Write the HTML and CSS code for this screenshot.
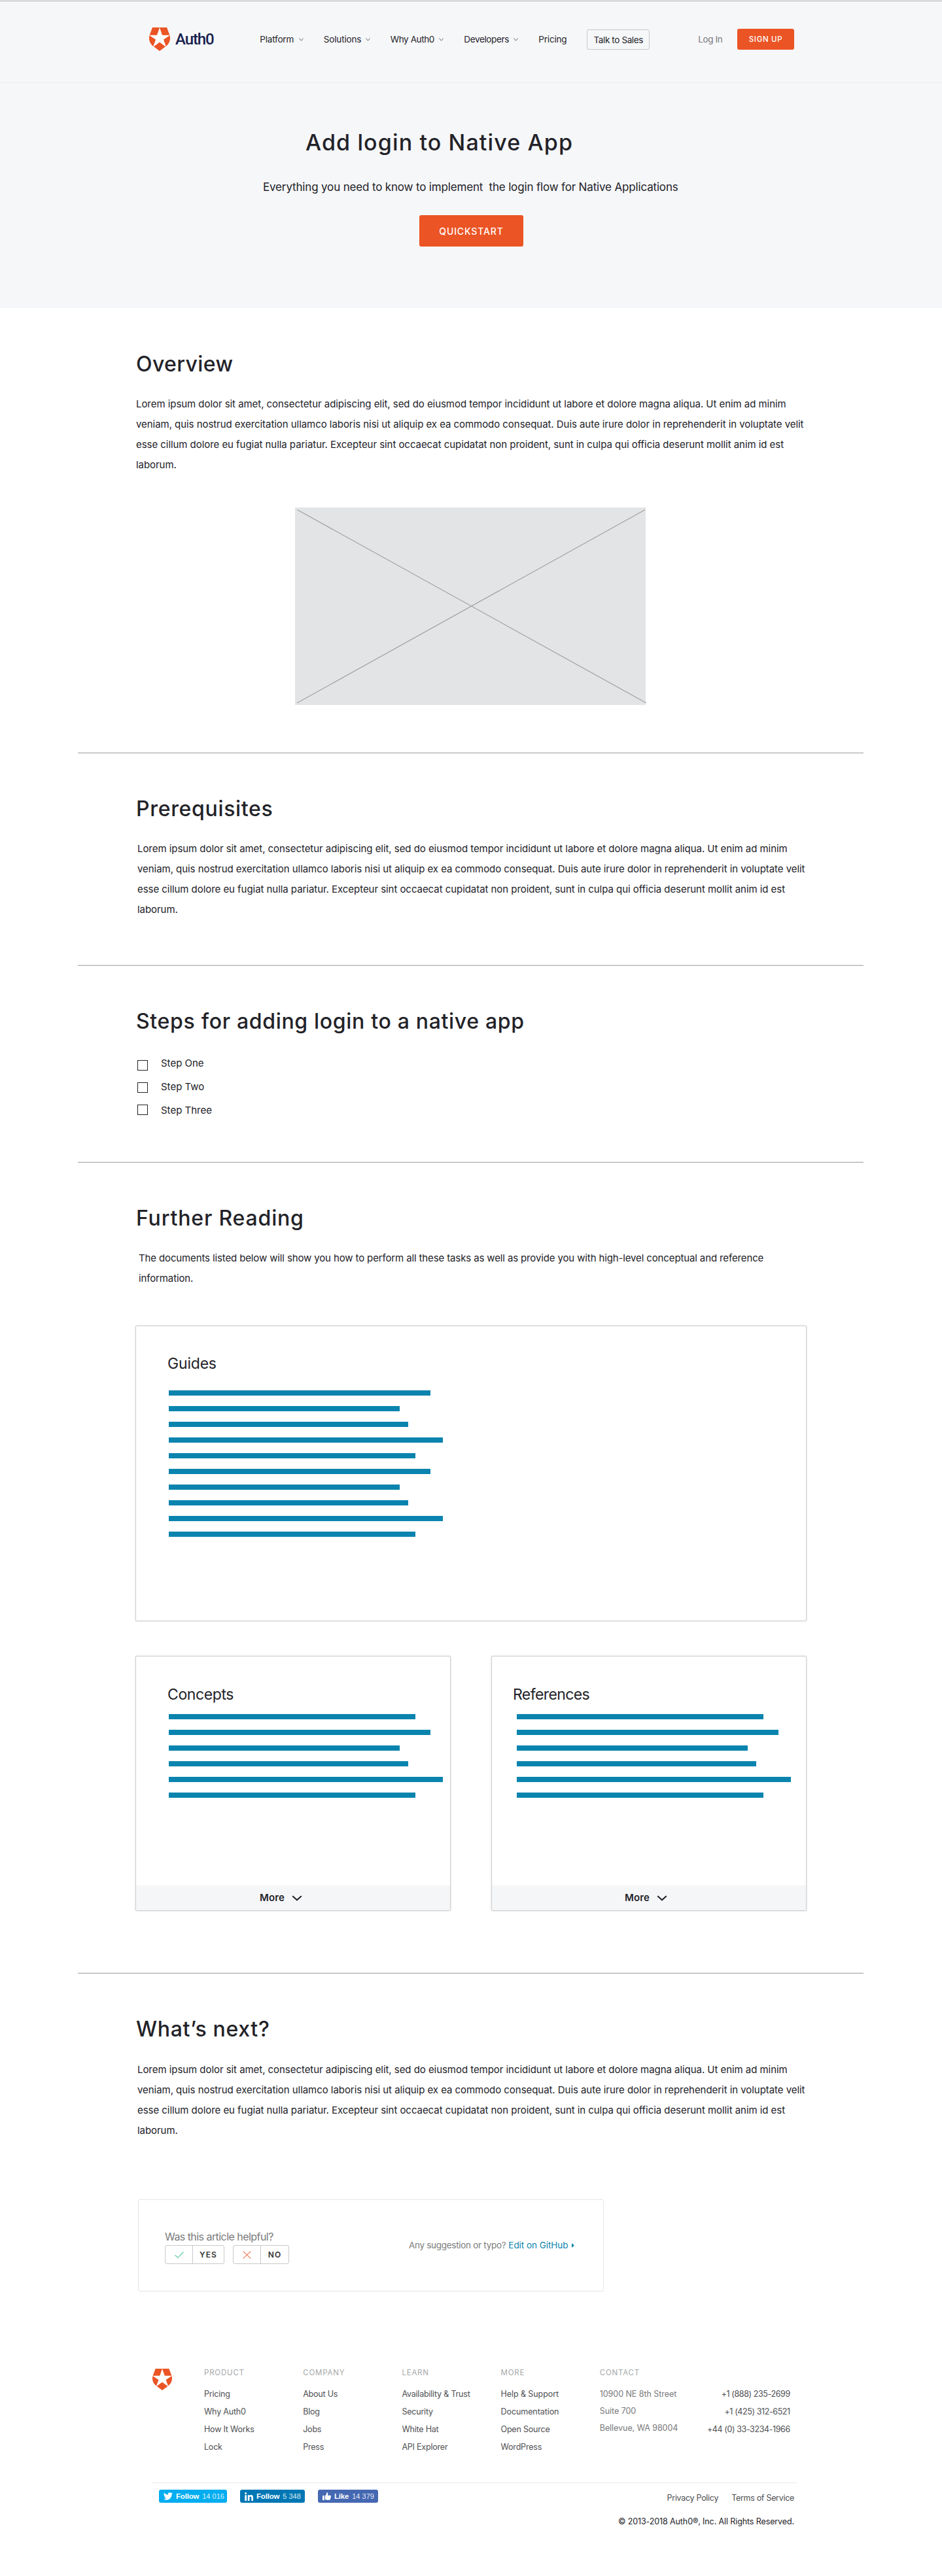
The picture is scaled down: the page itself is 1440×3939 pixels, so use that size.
FILE: index.html
```
<!DOCTYPE html>
<html lang="en">
<head>
<meta charset="utf-8">
<title>Add login to Native App</title>
<link rel="stylesheet" href="styles.css">
</head>
<body>
<svg class="defs" width="0" height="0" aria-hidden="true">
  <symbol id="shield" viewBox="0 0 32 36">
    <path fill="#eb5424" d="M5 0H27L31.3 11.5C33.5 19 30.500 25.500 25 29.300L16 36 7 29.300C1.500 25.500-1.500 19 .7 11.500Z"/>
    <path fill="#fff" d="M16 0l4 11.700h12l-10 6.900 4 11.300-10-7.500-10 7.500 4-11.300L0 11.700h12z"/>
  </symbol>
  <symbol id="caret" viewBox="0 0 7 5"><path d="M.5.5l3 3.700 3-3.700" fill="none" stroke="#666" stroke-width="1"/></symbol>
  <symbol id="chevron" viewBox="0 0 16 9"><path d="M1.200 1.200L8 7.300l6.800-6.100" fill="none" stroke="#222228" stroke-width="2"/></symbol>
</svg>

<div class="top">
  <header class="nav">
    <a class="brand"><svg width="32" height="36"><use href="#shield"/></svg><span>Auth0</span></a>
    <nav class="menu">
      <a class="m1">Platform<svg width="7" height="5"><use href="#caret"/></svg></a>
      <a class="m2">Solutions<svg width="7" height="5"><use href="#caret"/></svg></a>
      <a class="m3">Why Auth0<svg width="7" height="5"><use href="#caret"/></svg></a>
      <a class="m4">Developers<svg width="7" height="5"><use href="#caret"/></svg></a>
      <a class="m5">Pricing</a>
    </nav>
    <a class="sales">Talk to Sales</a>
    <a class="login">Log In</a>
    <a class="signup">SIGN UP</a>
  </header>
  <section class="hero">
    <h1>Add login to Native App</h1>
    <p>Everything you need to know to implement&nbsp; the login flow for Native Applications</p>
    <a class="quick">QUICKSTART</a>
  </section>
</div>

<main>
  <section class="block overview">
    <h2>Overview</h2>
    <p>Lorem ipsum dolor sit amet, consectetur adipiscing elit, sed do eiusmod tempor incididunt ut labore et dolore magna aliqua. Ut enim ad minim<br>veniam, quis nostrud exercitation ullamco laboris nisi ut aliquip ex ea commodo consequat. Duis aute irure dolor in reprehenderit in voluptate velit<br>esse cillum dolore eu fugiat nulla pariatur. Excepteur sint occaecat cupidatat non proident, sunt in culpa qui officia deserunt mollit anim id est<br>laborum.</p>
    <svg class="picture" width="537" height="302"><rect width="536" height="302" fill="#e3e4e6"/><path d="M3.500 3.500L537 299M535 3.500L3 299" stroke="#9fa1a0" stroke-width="1.200" fill="none"/></svg>
  </section>

  <section class="block prereq">
    <h2>Prerequisites</h2>
    <p>Lorem ipsum dolor sit amet, consectetur adipiscing elit, sed do eiusmod tempor incididunt ut labore et dolore magna aliqua. Ut enim ad minim<br>veniam, quis nostrud exercitation ullamco laboris nisi ut aliquip ex ea commodo consequat. Duis aute irure dolor in reprehenderit in voluptate velit<br>esse cillum dolore eu fugiat nulla pariatur. Excepteur sint occaecat cupidatat non proident, sunt in culpa qui officia deserunt mollit anim id est<br>laborum.</p>
  </section>

  <section class="block steps">
    <h2>Steps for adding login to a native app</h2>
    <div class="checklist">
      <div class="boxes"><i></i><i></i><i></i></div>
      <ul><li>Step One</li><li>Step Two</li><li>Step Three</li></ul>
    </div>
  </section>

  <section class="block reading">
    <h2>Further Reading</h2>
    <p>The documents listed below will show you how to perform all these tasks as well as provide you with high-level conceptual and reference<br>information.</p>
    <div class="cards">
      <article class="card guides">
        <h3>Guides</h3>
        <div class="bars">
          <i style="width:400px"></i><i style="width:353px"></i><i style="width:366px"></i><i style="width:419px"></i><i style="width:377px"></i>
          <i style="width:400px"></i><i style="width:353px"></i><i style="width:366px"></i><i style="width:419px"></i><i style="width:377px"></i>
        </div>
      </article>
      <article class="card concepts">
        <h3>Concepts</h3>
        <div class="bars">
          <i style="width:377px"></i><i style="width:400px"></i><i style="width:353px"></i><i style="width:366px"></i><i style="width:419px"></i><i style="width:377px"></i>
        </div>
        <a class="more">More<svg width="16" height="9"><use href="#chevron"/></svg></a>
      </article>
      <article class="card references">
        <h3>References</h3>
        <div class="bars">
          <i style="width:377px"></i><i style="width:400px"></i><i style="width:353px"></i><i style="width:366px"></i><i style="width:419px"></i><i style="width:377px"></i>
        </div>
        <a class="more">More<svg width="16" height="9"><use href="#chevron"/></svg></a>
      </article>
    </div>
  </section>

  <section class="block next">
    <h2>What’s next?</h2>
    <p>Lorem ipsum dolor sit amet, consectetur adipiscing elit, sed do eiusmod tempor incididunt ut labore et dolore magna aliqua. Ut enim ad minim<br>veniam, quis nostrud exercitation ullamco laboris nisi ut aliquip ex ea commodo consequat. Duis aute irure dolor in reprehenderit in voluptate velit<br>esse cillum dolore eu fugiat nulla pariatur. Excepteur sint occaecat cupidatat non proident, sunt in culpa qui officia deserunt mollit anim id est<br>laborum.</p>
    <div class="feedback">
      <div class="vote">
        <p class="question">Was this article helpful?</p>
        <div class="answers">
          <a class="yes"><svg width="14" height="10"><path d="M.5 5.500L5 9.300 13.500.5" fill="none" stroke="#5cc9ae" stroke-width="1.200"/></svg><span>YES</span></a>
          <a class="no"><svg width="13" height="12"><path d="M.7.5l11.600 11M12.300.5L.7 11.500" fill="none" stroke="#f08a6c" stroke-width="1.200"/></svg><span>NO</span></a>
        </div>
      </div>
      <p class="typo"><span>Any suggestion or typo?</span><a>Edit on GitHub</a><svg width="4" height="7"><path d="M0 0l4 3.500L0 7z" fill="#0a84ae"/></svg></p>
    </div>
  </section>
</main>

<footer>
  <div class="links">
    <svg class="mark" width="30" height="33" viewBox="0 0 32 36" preserveAspectRatio="none"><use href="#shield" width="32" height="36"/></svg>
    <div class="col"><h4>PRODUCT</h4><a>Pricing</a><a>Why Auth0</a><a>How It Works</a><a>Lock</a></div>
    <div class="col"><h4>COMPANY</h4><a>About Us</a><a>Blog</a><a>Jobs</a><a>Press</a></div>
    <div class="col"><h4>LEARN</h4><a>Availability &amp; Trust</a><a>Security</a><a>White Hat</a><a>API Explorer</a></div>
    <div class="col"><h4>MORE</h4><a class="wide">Help &amp; Support</a><a class="wide">Documentation</a><a>Open Source</a><a>WordPress</a></div>
    <div class="col address"><h4>CONTACT</h4><span>10900 NE 8th Street</span><span>Suite 700</span><span>Bellevue, WA 98004</span></div>
    <div class="col phones"><a>+1 (888) 235-2699</a><a>+1 (425) 312-6521</a><a>+44 (0) 33-3234-1966</a></div>
  </div>
  <div class="bottom">
    <div class="social">
      <a class="tw"><svg width="14" height="12" viewBox="0 0 24 20"><path fill="#fff" d="M24 2.400c-.9.400-1.800.7-2.800.8 1-.6 1.800-1.600 2.200-2.700-1 .6-2 1-3.100 1.200A4.900 4.900 0 0 0 11.900 6.200C7.700 6 4.100 4 1.700 1A4.900 4.900 0 0 0 3.200 7.600c-.8 0-1.600-.2-2.200-.6v.1a4.900 4.900 0 0 0 3.900 4.800c-.7.200-1.500.2-2.200.1a4.900 4.900 0 0 0 4.600 3.400A9.900 9.900 0 0 1 0 17.500 14 14 0 0 0 7.500 19.700c9.100 0 14.300-7.700 14-14.600 1-.7 1.800-1.600 2.500-2.700z"/></svg><b>Follow</b><span>14 016</span></a>
      <a class="li"><svg width="13" height="13" viewBox="0 0 13 13"><path fill="#fff" d="M.3 4.300H3V13H.3zM1.650 0a1.550 1.550 0 1 1 0 3.100 1.550 1.550 0 0 1 0-3.100zM4.700 4.300h2.600v1.200C7.700 4.700 8.600 4.100 9.800 4.100 12.400 4.100 13 5.800 13 8.200V13h-2.700V8.700c0-1 0-2.300-1.400-2.300S7.400 7.500 7.400 8.600V13H4.700z"/></svg><b>Follow</b><span>5 348</span></a>
      <a class="fb"><svg width="13" height="12" viewBox="0 0 13 12"><path fill="#fff" d="M0 5h3v7H0zM4 5.200C5.500 4.200 6.200 3 6.200.8 6.200 0 8.400-.3 8.400 2.200c0 1-.3 1.900-.5 2.500h3.900c1.400 0 1.500 1.600.7 2 .6.500.5 1.500-.3 1.900.4.600.1 1.400-.5 1.600.3.900-.2 1.600-1.200 1.600H6.800C5.500 11.800 5 11.200 4 11.100z"/></svg><b>Like</b><span>14 379</span></a>
    </div>
    <div class="legal">
      <div class="policies"><a>Privacy Policy</a><a class="terms">Terms of Service</a></div>
      <p>© 2013-2018 Auth0®, Inc. All Rights Reserved.</p>
    </div>
  </div>
</footer>
</body>
</html>
```

FILE: styles.css
```
* { box-sizing: border-box; }
body {
  margin: 0;
  width: 1440px;
  height: 3939px;
  background: #fff;
  color: #222228;
  font: 15px/31px Inter, "Liberation Sans", sans-serif;
  white-space: nowrap;
}
h1, h2, h3, h4, p, ul { margin: 0; padding: 0; font-weight: 400; }
ul { list-style: none; }
svg { display: block; flex: none; overflow: visible; }
.defs { position: absolute; }

/* header */
.top { height: 471px; padding-top: 1px; background: linear-gradient(#b0b0b0, #b0b0b0) 0 1px / 100% 1px no-repeat #f6f7f9; }
.nav {
  height: 126px;
  padding: 41px 226px 0 228px;
  border-bottom: 1px solid #ebecee;
  display: flex;
  align-items: flex-start;
  font-size: 13.500px;
  line-height: 36px;
}
.brand { width: 169.500px; display: flex; gap: 8px; }
.brand span { font: 500 24px/36px Roboto, sans-serif; letter-spacing: -1.100px; color: #16214d; }
.menu { display: flex; }
.menu a { display: flex; align-items: center; justify-content: space-between; margin-right: 31px; }
.m1 { width: 66.500px; letter-spacing: -.2px; }
.m2 { width: 71px; letter-spacing: -.15px; }
.m3 { width: 81.500px; letter-spacing: -.4px; }
.m4 { width: 83px; letter-spacing: -.35px; }
.menu .m5 { width: 44px; letter-spacing: -.2px; margin-right: 30px; }
.sales { width: 96px; height: 31px; margin-top: 3px; border: 1px solid #c6c8cb; border-radius: 3px; text-align: center; line-height: 30px; letter-spacing: -.38px; }
.login { margin-left: 74px; width: 60px; line-height: 37px; letter-spacing: -.35px; color: #76787c; }
.signup { width: 87px; height: 32px; margin-top: 2px; border-radius: 3px; background: #eb5424; color: #fff; font-size: 11.500px; font-weight: 500; line-height: 32px; letter-spacing: .7px; text-align: center; }

.hero { padding-top: 69px; }
.hero h1 { margin-left: 467px; font-size: 34px; font-weight: 500; line-height: 44px; letter-spacing: 1.120px; }
.hero p { margin: 32px 0 0 402px; font-size: 17px; line-height: 28px; letter-spacing: -.16px; }
.quick { display: block; width: 159px; height: 48px; margin: 29px 0 0 641px; border-radius: 3px; background: #eb5424; color: #fff; font-size: 14px; font-weight: 500; line-height: 50px; letter-spacing: .86px; text-align: center; }

/* article sections */
.block { width: 1201px; margin-left: 119px; padding: 65px 88px 0 89px; border-bottom: 1px solid #b0b0b0; box-shadow: inset 0 -1px #e6e6e6; }
h2 { font-size: 32px; font-weight: 500; line-height: 40px; letter-spacing: .68px; }
.block > p { margin: 26px 0 0 2px; letter-spacing: -.052px; }
.overview { height: 681px; padding-top: 66px; }
.overview > p { margin: 25px 0 0; }
.overview h2 { letter-spacing: .4px; }
.picture { margin: 50px 0 0 243px; }
.prereq { height: 325px; }
.prereq > p { margin-top: 25px; }
.steps { height: 301px; padding-top: 65px; }
.checklist { display: flex; margin: 26px 0 0 2px; gap: 20px; line-height: 36px; }
.boxes { display: grid; align-content: start; gap: 18px; padding-top: 13px; }
.boxes i { width: 16px; height: 16px; border: 1px solid #222228; }
.reading { height: 1240px; }
.reading h2 { letter-spacing: .83px; }
.reading > p { margin: 25px 0 0 4px; letter-spacing: -.13px; }
.cards { display: grid; grid-template-columns: 480px 480px; column-gap: 64px; row-gap: 55px; margin-top: 58px; }
.card { border-radius: 1px; box-shadow: 0 0 0 1px #cfcfcf, 0 0 3px 1px rgba(0, 0, 0, .14); display: flex; flex-direction: column; }
.guides { grid-column: 1 / 3; height: 450px; }
.concepts, .references { height: 388px; }
h3 { margin: 43px 0 0 48px; font-size: 23px; line-height: 30px; letter-spacing: -.4px; }
.guides h3 { margin-top: 42px; letter-spacing: -.19px; }
.bars { display: grid; gap: 16px; margin: 26px 0 0 50px; }
.bars i { height: 8px; background: #0a84ae; }
.concepts .bars, .references .bars { margin-top: 15px; }
.references h3 { margin-left: 32px; letter-spacing: -.6px; }
.references .bars { margin-left: 38px; }
.more { height: 38px; margin-top: auto; padding-left: 189px; display: flex; align-items: center; gap: 11px; background: #f5f6f8; font-weight: 600; line-height: 36px; letter-spacing: .1px; }
.references .more { padding-left: 203px; }

.next { border: 0; box-shadow: none; }
.feedback { width: 712px; height: 141px; margin: 90px 0 0 3px; border: 1px solid #e5e5e5; border-radius: 3px; display: flex; padding-left: 40px; color: #7b7b7b; }
.vote { width: 373px; flex: none; padding-top: 45px; }
.question { font-size: 16px; line-height: 22px; letter-spacing: -.55px; }
.answers { display: flex; gap: 13px; margin-top: 2px; }
.answers a { height: 29px; border: 1px solid #c9c9c9; border-radius: 3px; display: grid; grid-template-columns: 41px 1fr; align-items: center; justify-items: center; color: #333; font-size: 12px; font-weight: 600; letter-spacing: 1.100px; }
.answers span { width: 100%; height: 27px; border-left: 1px solid #c9c9c9; line-height: 27px; text-align: center; }
.yes { width: 91px; }
.no { width: 86px; }
.typo { display: flex; align-items: center; height: 31px; margin-top: 54px; font-size: 13.500px; letter-spacing: -.3px; }
.typo a { color: #0a84ae; margin-left: 4px; letter-spacing: -.05px; }
.typo svg { margin-left: 6px; }

/* footer */
footer { width: 986px; margin: 107px 0 0 233px; color: #4e4f52; font-size: 12.500px; line-height: 27px; letter-spacing: -.2px; }
.links { display: flex; height: 186px; padding-top: 11px; border-bottom: 1px solid #e9e9e9; }
.mark { margin-right: 49px; }
.col { width: 151.200px; display: flex; flex-direction: column; }
h4 { height: 29px; margin: -7px 0 3px; font-size: 11.500px; line-height: 26px; letter-spacing: .8px; color: #a5a8a8; }
.wide { letter-spacing: -.08px; }
.address { width: 160px; color: #77787a; line-height: 26px; letter-spacing: -.05px; }
.address h4 { margin-bottom: 4px; }
.phones { width: 131px; padding-top: 25px; text-align: right; letter-spacing: -.4px; }
.bottom { display: flex; justify-content: space-between; padding: 10px 5px 0 10px; }
.social { display: flex; gap: 20px; font: 11.500px/20px "Liberation Sans", Arial, sans-serif; letter-spacing: 0; color: #fff; }
.social a { height: 20px; border-radius: 3px; display: flex; align-items: center; padding-left: 7px; }
.social b { margin: 0 5px 0 5px; letter-spacing: -.2px; }
.social span { opacity: .85; font-size: 11px; }
.tw { width: 104px; background: #00adf0; }
.li { width: 99px; background: #0077b5; }
.fb { width: 92px; background: #4568b2; }
.legal { text-align: right; }
.policies { display: flex; justify-content: flex-end; gap: 20px; letter-spacing: -.3px; margin-top: -1px; }
.legal p { margin-top: 9px; color: #222228; letter-spacing: -.11px; }
```
